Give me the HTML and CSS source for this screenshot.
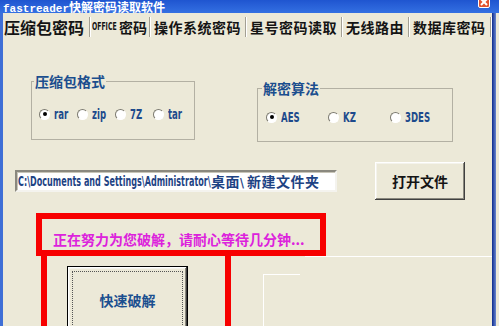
FILE: index.html
```html
<!DOCTYPE html>
<html>
<head>
    <meta charset="utf-8">
    <title>fastreader快解密码读取软件</title>
    <link rel="stylesheet" href="styles.css">
</head>
<body>
<div class="window">
    <div class="titlebar">
        <span class="title"><span class="title-en">fastreader</span>快解密码读取软件</span>
        <span class="close">
            <svg width="10" height="10" viewBox="0 0 10 10"><path d="M2 2 L8 8 M8 2 L2 8" stroke="#fff" stroke-width="2"/></svg>
        </span>
    </div>
    <div class="frame">
        <div class="client">
            <div class="tabs">
                <div class="tab active">压缩包密码</div>
                <div class="tab office"><span class="tab-en"><span class="squeeze">OFFICE</span></span>密码</div>
                <div class="tab">操作系统密码</div>
                <div class="tab">星号密码读取</div>
                <div class="tab">无线路由</div>
                <div class="tab">数据库密码</div>
            </div>

            <div class="groups">
                <fieldset class="group group-format">
                    <legend>压缩包格式</legend>
                    <div class="options">
                        <label class="option"><span class="radio checked"></span><span class="squeeze">rar</span></label>
                        <label class="option"><span class="radio"></span><span class="squeeze">zip</span></label>
                        <label class="option"><span class="radio"></span><span class="squeeze">7Z</span></label>
                        <label class="option"><span class="radio"></span><span class="squeeze">tar</span></label>
                    </div>
                </fieldset>
                <fieldset class="group group-algo">
                    <legend>解密算法</legend>
                    <div class="options">
                        <label class="option"><span class="radio checked"></span><span class="squeeze">AES</span></label>
                        <label class="option"><span class="radio"></span><span class="squeeze">KZ</span></label>
                        <label class="option"><span class="radio"></span><span class="squeeze">3DES</span></label>
                    </div>
                </fieldset>
            </div>

            <div class="file-row">
                <div class="path"><span class="path-latin"><span class="squeeze">C:\Documents and Settings\Administrator\</span></span><span class="cjk">桌面</span><span class="slash">\</span><span class="cjk">新建文件夹</span></div>
                <button class="btn open-btn">打开文件</button>
            </div>

            <div class="status">正在努力为您破解，请耐心等待几分钟...</div>

            <div class="lower">
                <div class="crack-box">
                    <button class="btn crack-btn"><span class="focus">快速破解</span></button>
                </div>
                <div class="lower-right">
                    <div class="rule"></div>
                    <div class="stub"></div>
                </div>
            </div>
        </div>
        <div class="edge-right"></div>
    </div>
</div>
</body>
</html>
```

FILE: styles.css
```css
* {
    box-sizing: border-box;
}
html, body {
    margin: 0;
}
body {
    background: #fff;
    font-family: "Noto Sans CJK SC", sans-serif;
}
.window {
    width: 499px;
    height: 326px;
    background: #ece9d8;
    display: flex;
    flex-direction: column;
    overflow: hidden;
}

/* narrow latin text, squeezed horizontally from the left */
.squeeze {
    display: inline-block;
    white-space: nowrap;
    transform: scaleX(0.68);
    transform-origin: left center;
}

/* title bar */
.titlebar {
    height: 13px;
    flex: none;
    display: flex;
    align-items: flex-start;
    padding: 1px 0 0 3px;
    background: linear-gradient(#1f55d0, #3470e2);
    color: #fff;
    overflow: hidden;
}
.title {
    font: bold 12px/12px "Noto Sans CJK SC", sans-serif;
    white-space: nowrap;
}
.title-en {
    font-family: "Liberation Mono", monospace;
    font-size: 11px;
}
.close {
    margin-left: auto;
    margin-right: 9px;
    margin-top: -5px;
    width: 12px;
    height: 12px;
    background: #e2532f;
    border: 1px solid #fff;
    border-radius: 2px;
    display: flex;
    align-items: center;
    justify-content: center;
}

.frame {
    flex: 1;
    display: flex;
    border-left: 3px solid #3f6fd6;
}
.client {
    width: 489px;
    display: flex;
    flex-direction: column;
}
.edge-right {
    width: 4px;
    background: linear-gradient(90deg, #0c2a8c, #6a86d0);
}

/* tabs */
.tabs {
    display: flex;
    height: 24px;
    padding-top: 4px;
    flex: none;
}
.tab {
    height: 20px;
    padding: 0 4px;
    font: bold 14px/20px "Noto Sans CJK SC", sans-serif;
    letter-spacing: 0.5px;
    color: #141414;
    border-right: 1px solid #a3a094;
    box-shadow: 1px 0 0 #fff;
    white-space: nowrap;
}
.tab.active {
    padding: 0 5px 0 1px;
    font-size: 16px;
    letter-spacing: 0;
}
.tab.office {
    padding: 0 2px;
    letter-spacing: 0;
}
.tab-en {
    display: inline-block;
    width: 27px;
    font: bold 11px/20px "DejaVu Sans Condensed", sans-serif;
    vertical-align: top;
}
.tab-en .squeeze {
    transform: scaleX(0.62);
}

/* group boxes */
.groups {
    display: flex;
    align-items: flex-start;
    gap: 62px;
    margin-top: 37px;
    padding-left: 28px;
}
.group {
    margin: 0;
    padding: 0 0 0 2px;
    border: 1px solid #b3b0a3;
}
.group legend {
    padding: 0 1px;
    font: bold 14px/14px "Noto Sans CJK SC", sans-serif;
    color: #1b4e8e;
}
.group-format {
    width: 164px;
}
.group-algo {
    width: 195px;
    margin-top: 7px;
    padding-left: 4px;
}
.options {
    display: grid;
    align-items: center;
    height: 14px;
}
.group-format .options {
    grid-template-columns: repeat(4, 38px);
    margin: 19px 0 18px 5px;
}
.group-algo .options {
    grid-template-columns: repeat(3, 62px);
    margin: 15px 0 17px 4px;
}
.option {
    display: flex;
    align-items: center;
    gap: 4px;
    font: bold 14px/14px "DejaVu Sans Condensed", sans-serif;
    color: #1d4a8c;
    white-space: nowrap;
}
.radio {
    width: 11px;
    height: 11px;
    flex: none;
    border-radius: 50%;
    border: 1px solid;
    border-color: #7c7a70 #fff #fff #7c7a70;
    background: #fff;
    display: flex;
    align-items: center;
    justify-content: center;
}
.radio.checked::after {
    content: "";
    width: 4px;
    height: 4px;
    border-radius: 50%;
    background: #000;
}

/* path + open */
.file-row {
    display: flex;
    align-items: center;
    gap: 38px;
    margin-top: 20px;
    padding-left: 12px;
}
.path {
    width: 322px;
    height: 22px;
    padding-left: 1px;
    background: #fff;
    border: 2px solid;
    border-color: #8a887e #f4f3ee #f4f3ee #8a887e;
    box-shadow: inset 1px 1px #c8c5b8;
    font: bold 14px/18px "DejaVu Sans Condensed", sans-serif;
    color: #1e4384;
    white-space: nowrap;
    overflow: hidden;
}
.path-latin {
    display: inline-block;
    width: 193px;
    vertical-align: top;
}
.path-latin .squeeze {
    transform: scaleX(0.64);
}
.path .slash {
    display: inline-block;
    width: 7px;
    font-size: 12px;
}
.path .cjk {
    font: bold 14px/18px "Noto Sans CJK SC", sans-serif;
    letter-spacing: 0.5px;
}
.btn {
    background: #ece9d8;
    border: none;
    padding: 0;
    box-shadow: inset -1px -1px #404040, inset 1px 1px #fff, inset -2px -2px #8a887e, inset 2px 2px #f4f3ec;
    font: bold 14px "Noto Sans CJK SC", sans-serif;
    cursor: pointer;
}
.open-btn {
    width: 90px;
    height: 38px;
    color: #141414;
}

/* status message */
.status {
    width: 290px;
    margin: 13px 0 0 33px;
    padding: 12px 0 3px 11px;
    border: 6px solid #f70000;
    font: bold 14px/16px "Noto Sans CJK SC", sans-serif;
    color: #dc22dc;
    white-space: nowrap;
}

/* lower area */
.lower {
    flex: 1;
    display: flex;
}
.crack-box {
    width: 190px;
    margin-left: 38px;
    padding: 10px 0 0 20px;
    border-left: 6px solid #f70000;
    border-right: 6px solid #f70000;
}
.crack-btn {
    width: 121px;
    height: 68px;
    padding: 4px;
    border: 1px solid #000;
    color: #1b4f8f;
}
.crack-btn .focus {
    display: flex;
    align-items: center;
    justify-content: center;
    height: 100%;
    border: 1px dotted #555;
}
.lower-right {
    flex: 1;
    display: flex;
    flex-direction: column;
}
.rule {
    height: 1px;
    margin-left: 74px;
    background: #fff;
}
.stub {
    flex: 1;
    width: 37px;
    margin: 17px 0 0 32px;
    border-top: 1px solid #fff;
    border-left: 1px solid #fff;
}
```
